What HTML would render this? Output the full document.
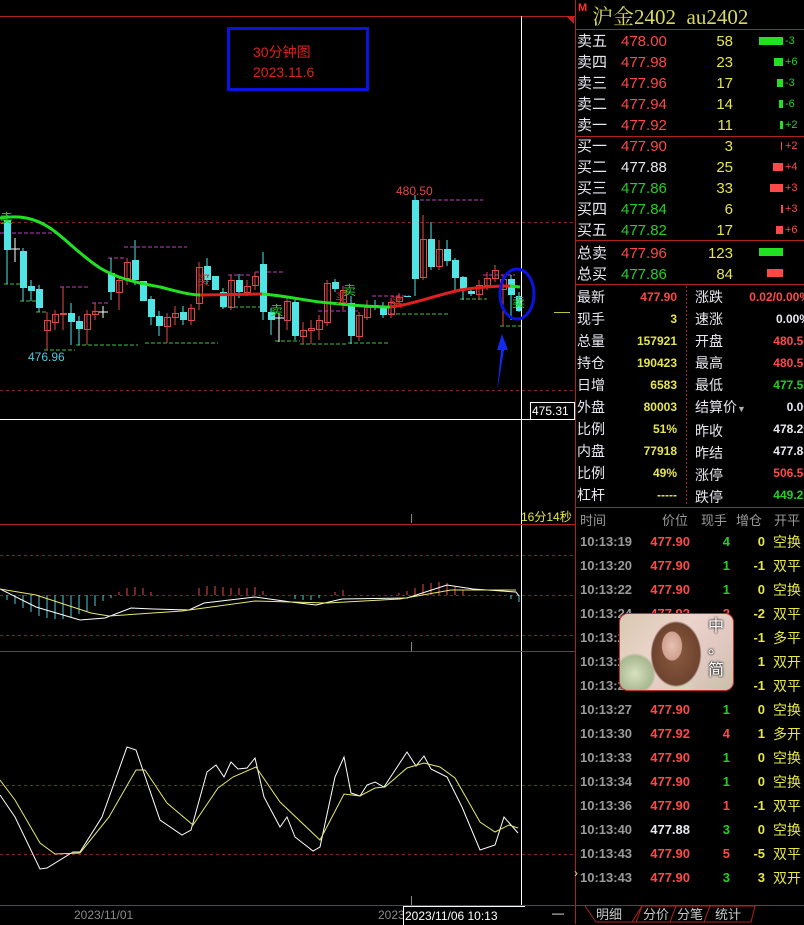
<!DOCTYPE html>
<html><head><meta charset="utf-8"><style>
body{margin:0;width:804px;height:924px;background:#000;overflow:hidden;position:relative;font-family:"Liberation Sans","Noto Sans CJK SC",sans-serif}
.a{position:absolute;white-space:nowrap}
.r{color:#ff4848}.g{color:#22d022}.y{color:#e6e64a}.w{color:#e8e8f0}.gr{color:#9a9a9a}
.ob{font-size:15px;line-height:21px}
.st{font-size:13px;line-height:22px}
.tk{font-size:13px;font-weight:bold;line-height:24px}
</style></head><body>
<svg class="a" style="left:0;top:0" width="804" height="924">
<line x1="0" y1="16.5" x2="575" y2="16.5" stroke="#b02020"/>
<polygon points="566,16 574,16 574,24" fill="#c02020"/>
<line x1="575.5" y1="0" x2="575.5" y2="924" stroke="#b02020"/>
<line x1="521.5" y1="16" x2="521.5" y2="905" stroke="#fff"/>
<line x1="0" y1="222.5" x2="575" y2="222.5" stroke="#902020" stroke-dasharray="3,3"/>
<line x1="0" y1="390.5" x2="575" y2="390.5" stroke="#902020" stroke-dasharray="3,3"/>
<line x1="0" y1="419.5" x2="575" y2="419.5" stroke="#fff"/>
<rect x="530.5" y="402.5" width="44" height="17" fill="#000" stroke="#fff"/>
<line x1="0" y1="524.5" x2="575" y2="524.5" stroke="#b02020"/>
<line x1="411.5" y1="514" x2="411.5" y2="523" stroke="#888"/>
<line x1="0" y1="555.5" x2="575" y2="555.5" stroke="#902020" stroke-dasharray="3,3"/>
<line x1="0" y1="595.5" x2="575" y2="595.5" stroke="#902020" stroke-dasharray="3,3"/>
<line x1="0" y1="635.5" x2="575" y2="635.5" stroke="#902020" stroke-dasharray="3,3"/>
<line x1="0" y1="651.5" x2="575" y2="651.5" stroke="#b02020"/>
<line x1="411.5" y1="642" x2="411.5" y2="651" stroke="#888"/>
<line x1="0" y1="785.5" x2="575" y2="785.5" stroke="#902020" stroke-dasharray="3,3"/>
<line x1="0" y1="854.5" x2="575" y2="854.5" stroke="#902020" stroke-dasharray="3,3"/>
<line x1="0" y1="905.5" x2="575" y2="905.5" stroke="#b02020"/>
<line x1="411.5" y1="896" x2="411.5" y2="905" stroke="#888"/>
<line x1="554" y1="312.5" x2="570" y2="312.5" stroke="#c0c040"/>
<rect x="228.5" y="28.5" width="139" height="61" fill="none" stroke="#0a14e0" stroke-width="3"/>
<g stroke="#c040c0" stroke-dasharray="4,2">
<line x1="0" y1="233" x2="58" y2="233"/><line x1="60" y1="287" x2="90" y2="287"/><line x1="124" y1="247" x2="187" y2="247"/><line x1="108" y1="258" x2="124" y2="258"/><line x1="92" y1="303" x2="108" y2="303"/><line x1="228" y1="275" x2="250" y2="275"/><line x1="255" y1="272" x2="283" y2="272"/><line x1="318" y1="311" x2="360" y2="311"/><line x1="372" y1="296" x2="410" y2="296"/><line x1="420" y1="200" x2="483" y2="200"/><line x1="483" y1="275" x2="515" y2="275"/>
</g>
<g stroke="#40c040" stroke-dasharray="4,2">
<line x1="4" y1="284" x2="20" y2="284"/><line x1="20" y1="301" x2="40" y2="301"/><line x1="36" y1="312" x2="46" y2="312"/><line x1="44" y1="350" x2="75" y2="350"/><line x1="76" y1="345" x2="138" y2="345"/><line x1="145" y1="343" x2="218" y2="343"/><line x1="222" y1="307" x2="260" y2="307"/><line x1="275" y1="341" x2="300" y2="341"/><line x1="300" y1="344" x2="348" y2="344"/><line x1="348" y1="343" x2="388" y2="343"/><line x1="390" y1="314" x2="450" y2="314"/><line x1="460" y1="299" x2="487" y2="299"/><line x1="500" y1="326" x2="521" y2="326"/>
</g>
<g stroke-width="1">
<g stroke="#4fe5e5"><line x1="7" y1="215" x2="7" y2="284"/><line x1="23" y1="248" x2="23" y2="301"/><line x1="31" y1="280" x2="31" y2="301"/><line x1="39" y1="285" x2="39" y2="312"/><line x1="71" y1="303" x2="71" y2="345"/><line x1="79" y1="316" x2="79" y2="345"/><line x1="111" y1="258" x2="111" y2="300"/><line x1="135" y1="240" x2="135" y2="285"/><line x1="151" y1="296" x2="151" y2="325"/><line x1="159" y1="311" x2="159" y2="336"/><line x1="183" y1="306" x2="183" y2="325"/><line x1="207" y1="258" x2="207" y2="284"/><line x1="223" y1="288" x2="223" y2="309"/><line x1="239" y1="274" x2="239" y2="298"/><line x1="263" y1="252" x2="263" y2="320"/><line x1="271" y1="308" x2="271" y2="335"/><line x1="295" y1="298" x2="295" y2="340"/><line x1="335" y1="279" x2="335" y2="292"/><line x1="351" y1="296" x2="351" y2="344"/><line x1="375" y1="300" x2="375" y2="310"/><line x1="383" y1="302" x2="383" y2="318"/><line x1="415" y1="195" x2="415" y2="296"/><line x1="431" y1="222" x2="431" y2="270"/><line x1="447" y1="240" x2="447" y2="266"/><line x1="455" y1="258" x2="455" y2="290"/><line x1="463" y1="276" x2="463" y2="300"/><line x1="471" y1="288" x2="471" y2="296"/><line x1="511" y1="275" x2="511" y2="320"/><line x1="519" y1="292" x2="519" y2="312"/></g>
<g stroke="#e04848"><line x1="47" y1="312" x2="47" y2="350"/><line x1="55" y1="310" x2="55" y2="330"/><line x1="63" y1="287" x2="63" y2="330"/><line x1="87" y1="310" x2="87" y2="345"/><line x1="95" y1="303" x2="95" y2="320"/><line x1="119" y1="276" x2="119" y2="310"/><line x1="127" y1="258" x2="127" y2="285"/><line x1="167" y1="313" x2="167" y2="343"/><line x1="175" y1="306" x2="175" y2="325"/><line x1="191" y1="304" x2="191" y2="325"/><line x1="199" y1="262" x2="199" y2="310"/><line x1="231" y1="275" x2="231" y2="310"/><line x1="247" y1="280" x2="247" y2="296"/><line x1="255" y1="272" x2="255" y2="290"/><line x1="287" y1="298" x2="287" y2="330"/><line x1="303" y1="322" x2="303" y2="344"/><line x1="311" y1="320" x2="311" y2="344"/><line x1="319" y1="315" x2="319" y2="340"/><line x1="327" y1="280" x2="327" y2="326"/><line x1="343" y1="286" x2="343" y2="310"/><line x1="359" y1="312" x2="359" y2="341"/><line x1="367" y1="300" x2="367" y2="320"/><line x1="391" y1="298" x2="391" y2="318"/><line x1="399" y1="293" x2="399" y2="303"/><line x1="423" y1="215" x2="423" y2="280"/><line x1="439" y1="240" x2="439" y2="270"/><line x1="479" y1="280" x2="479" y2="300"/><line x1="487" y1="272" x2="487" y2="290"/><line x1="495" y1="265" x2="495" y2="282"/><line x1="503" y1="276" x2="503" y2="326"/></g>
<line x1="15" y1="238" x2="15" y2="262" stroke="#fff"/><line x1="10" y1="249" x2="20" y2="249" stroke="#fff"/>
<line x1="103" y1="306" x2="103" y2="318" stroke="#fff"/><line x1="98" y1="312" x2="108" y2="312" stroke="#fff"/>
<line x1="279" y1="313" x2="279" y2="342" stroke="#fff"/><line x1="274" y1="318" x2="284" y2="318" stroke="#fff"/>
</g>
<g fill="#4fe5e5">
<rect x="4" y="220" width="7" height="30"/><rect x="20" y="251" width="7" height="37"/><rect x="28" y="286" width="7" height="5"/><rect x="36" y="289" width="7" height="19"/><rect x="68" y="313" width="7" height="9"/><rect x="76" y="321" width="7" height="8"/><rect x="108" y="273" width="7" height="19"/><rect x="132" y="260" width="7" height="20"/><rect x="140" y="281" width="7" height="20"/><rect x="148" y="299" width="7" height="18"/><rect x="156" y="316" width="7" height="10"/><rect x="180" y="312" width="7" height="8"/><rect x="204" y="266" width="7" height="14"/><rect x="212" y="276" width="7" height="14"/><rect x="220" y="292" width="7" height="15"/><rect x="236" y="280" width="7" height="12"/><rect x="260" y="264" width="7" height="48"/><rect x="268" y="312" width="7" height="8"/><rect x="292" y="302" width="7" height="34"/><rect x="332" y="282" width="7" height="7"/><rect x="348" y="303" width="7" height="33"/><rect x="372" y="305" width="7" height="2"/><rect x="380" y="307" width="7" height="8"/><rect x="404" y="296" width="7" height="1"/><rect x="412" y="200" width="7" height="79"/><rect x="428" y="239" width="7" height="28"/><rect x="444" y="249" width="7" height="12"/><rect x="452" y="260" width="7" height="18"/><rect x="460" y="277" width="7" height="13"/><rect x="468" y="291" width="7" height="3"/><rect x="508" y="279" width="7" height="16"/><rect x="516" y="296" width="5" height="15"/>
</g>
<g fill="none" stroke="#e04848">
<rect x="44.5" y="320.5" width="6" height="10"/><rect x="52.5" y="314.5" width="6" height="8"/><rect x="60.5" y="313.5" width="6" height="1"/><rect x="84.5" y="314.5" width="6" height="15"/><rect x="92.5" y="311.5" width="6" height="3"/><rect x="116.5" y="280.5" width="6" height="12"/><rect x="124.5" y="262.5" width="6" height="16"/><rect x="164.5" y="317.5" width="6" height="9"/><rect x="172.5" y="313.5" width="6" height="4"/><rect x="188.5" y="308.5" width="6" height="12"/><rect x="196.5" y="267.5" width="6" height="36"/><rect x="228.5" y="280.5" width="6" height="27"/><rect x="244.5" y="286.5" width="6" height="6"/><rect x="252.5" y="276.5" width="6" height="9"/><rect x="284.5" y="301.5" width="6" height="19"/><rect x="300.5" y="330.5" width="6" height="6"/><rect x="308.5" y="328.5" width="6" height="2"/><rect x="316.5" y="320.5" width="6" height="9"/><rect x="324.5" y="283.5" width="6" height="39"/><rect x="340.5" y="290.5" width="6" height="13"/><rect x="356.5" y="315.5" width="6" height="21"/><rect x="364.5" y="307.5" width="6" height="10"/><rect x="388.5" y="302.5" width="6" height="12"/><rect x="396.5" y="297.5" width="6" height="4"/><rect x="420.5" y="239.5" width="6" height="38"/><rect x="436.5" y="249.5" width="6" height="17"/><rect x="476.5" y="285.5" width="6" height="9"/><rect x="484.5" y="278.5" width="6" height="7"/><rect x="492.5" y="270.5" width="6" height="8"/><rect x="500.5" y="279.5" width="6" height="10"/>
</g>
<path d="M0,218 C20,215 35,218 50,228 C65,238 80,255 100,268 C120,280 140,283 160,287 C180,292 190,295 200,295" fill="none" stroke="#22e022" stroke-width="3"/>
<path d="M200,295 L262,294" fill="none" stroke="#e02020" stroke-width="3"/>
<path d="M262,294 C290,296 310,302 330,303 C360,306 375,307 390,307" fill="none" stroke="#22e022" stroke-width="3"/>
<path d="M390,307 C410,305 430,297 460,290 C480,287 495,286 510,286" fill="none" stroke="#e02020" stroke-width="3"/>
<path d="M510,286 L520,287" fill="none" stroke="#22e022" stroke-width="3"/>
<ellipse cx="517" cy="294" rx="17" ry="25" fill="none" stroke="#0a14e0" stroke-width="3"/>
<polygon points="502,334 497,350 501,350 497,392 504,350 508,350" fill="#1428f0"/>
<g stroke="#4fc8d8"><line x1="7" y1="595" x2="7" y2="600"/><line x1="15" y1="595" x2="15" y2="604"/><line x1="23" y1="595" x2="23" y2="608"/><line x1="31" y1="595" x2="31" y2="612"/><line x1="39" y1="595" x2="39" y2="616"/><line x1="47" y1="595" x2="47" y2="618"/><line x1="55" y1="595" x2="55" y2="619"/><line x1="63" y1="595" x2="63" y2="619"/><line x1="71" y1="595" x2="71" y2="617"/><line x1="79" y1="595" x2="79" y2="614"/><line x1="87" y1="595" x2="87" y2="611"/><line x1="95" y1="595" x2="95" y2="606"/><line x1="103" y1="595" x2="103" y2="601"/><line x1="111" y1="595" x2="111" y2="598"/><line x1="295" y1="595" x2="295" y2="599"/><line x1="303" y1="595" x2="303" y2="600"/><line x1="311" y1="595" x2="311" y2="600"/><line x1="319" y1="595" x2="319" y2="598"/><line x1="511" y1="595" x2="511" y2="599"/><line x1="519" y1="595" x2="519" y2="602"/></g>
<g stroke="#e04848"><line x1="119" y1="595" x2="119" y2="592"/><line x1="127" y1="595" x2="127" y2="588"/><line x1="135" y1="595" x2="135" y2="587"/><line x1="143" y1="595" x2="143" y2="588"/><line x1="151" y1="595" x2="151" y2="592"/><line x1="199" y1="595" x2="199" y2="588"/><line x1="207" y1="595" x2="207" y2="586"/><line x1="215" y1="595" x2="215" y2="586"/><line x1="223" y1="595" x2="223" y2="587"/><line x1="231" y1="595" x2="231" y2="588"/><line x1="239" y1="595" x2="239" y2="588"/><line x1="247" y1="595" x2="247" y2="588"/><line x1="255" y1="595" x2="255" y2="587"/><line x1="263" y1="595" x2="263" y2="591"/><line x1="335" y1="595" x2="335" y2="592"/><line x1="343" y1="595" x2="343" y2="590"/><line x1="399" y1="595" x2="399" y2="593"/><line x1="407" y1="595" x2="407" y2="591"/><line x1="415" y1="595" x2="415" y2="588"/><line x1="423" y1="595" x2="423" y2="584"/><line x1="431" y1="595" x2="431" y2="583"/><line x1="439" y1="595" x2="439" y2="582"/><line x1="447" y1="595" x2="447" y2="583"/><line x1="455" y1="595" x2="455" y2="586"/><line x1="463" y1="595" x2="463" y2="590"/></g>
<polyline points="0,589 36,607 80,620 105,618 131,608 153,609 189,610 204,603 255,597 291,602 316,605 342,599 407,598 447,585 473,589 516,592 519,596" fill="none" stroke="#fff"/>
<polyline points="0,589 36,595 91,613 109,616 182,611 255,601 327,603 400,599 451,590 516,590" fill="none" stroke="#e8e870"/>
<polyline points="0,795 15,817 40,869 47,868 73,852 80,852 102,817 127,747 136,750 160,820 182,835 191,830 207,772 216,765 224,777 231,762 238,769 247,768 255,758 264,797 280,827 287,817 295,837 313,851 320,847 335,777 344,757 351,793 360,796 367,785 375,782 384,787 407,752 416,766 424,756 431,769 447,777 462,807 480,850 495,845 504,817 518,833" fill="none" stroke="#fff"/>
<polyline points="0,780 15,800 40,843 55,854 80,853 109,817 136,770 145,770 167,803 193,825 218,788 233,777 256,767 280,802 320,840 344,794 360,796 375,788 385,787 407,768 424,763 440,767 455,778 480,822 495,832 509,825 518,828" fill="none" stroke="#e8e870"/>
<line x1="576" y1="29.5" x2="804" y2="29.5" stroke="#b02020"/>
<line x1="576" y1="136.5" x2="804" y2="136.5" stroke="#b02020"/>
<line x1="576" y1="240.5" x2="804" y2="240.5" stroke="#b02020"/>
<line x1="576" y1="284.5" x2="804" y2="284.5" stroke="#b02020"/>
<line x1="686.5" y1="286" x2="686.5" y2="506" stroke="#b02020" stroke-dasharray="2,2"/>
<line x1="576" y1="507.5" x2="804" y2="507.5" stroke="#b02020"/>
<g fill="#22e022"><rect x="759" y="37" width="24" height="8"/><rect x="774" y="58" width="9" height="8"/><rect x="777" y="79" width="6" height="8"/><rect x="779" y="100" width="4" height="8"/><rect x="780" y="121" width="3" height="8"/><rect x="759" y="248" width="24" height="8"/></g>
<g fill="#ff4848"><rect x="781" y="142" width="1" height="8"/><rect x="773" y="163" width="10" height="8"/><rect x="770" y="184" width="13" height="8"/><rect x="781" y="205" width="2" height="8"/><rect x="776" y="226" width="7" height="8"/><rect x="767" y="269" width="16" height="8"/></g>
<line x1="576" y1="905.5" x2="804" y2="905.5" stroke="#b02020"/>
<path d="M585,906 L596,922 L632,922 L642,906 M642,906 L632,922 M642,906 L674,906 M632,922 L636,922 L642,906 L676,906 L670,922 L636,922 M676,906 L710,906 L704,922 L670,922 M710,906 L755,906 L751,922 L704,922" fill="none" stroke="#b02020"/>
<text x="596" y="919" fill="#c8c8c8" font-size="13" font-family="Noto Sans CJK SC">明细</text>
<text x="643" y="919" fill="#c8c8c8" font-size="13" font-family="Noto Sans CJK SC">分价</text>
<text x="677" y="919" fill="#c8c8c8" font-size="13" font-family="Noto Sans CJK SC">分笔</text>
<text x="715" y="919" fill="#c8c8c8" font-size="13" font-family="Noto Sans CJK SC">统计</text>
</svg>

<div class="a" style="left:253px;top:42px;color:#e02020;font-size:14px;line-height:20px">30分钟图<br>2023.11.6</div>
<div class="a" style="left:396px;top:184px;color:#e04848;font-size:12px">480.50</div>
<div class="a" style="left:28px;top:350px;color:#4fc8e0;font-size:12px">476.96</div>
<div class="a" style="left:0px;top:208px;color:#22d022;font-size:13px">卖</div>
<div class="a" style="left:197px;top:270px;color:#e02020;font-size:13px">买</div>
<div class="a" style="left:270px;top:300px;color:#22d022;font-size:13px">卖</div>
<div class="a" style="left:335px;top:288px;color:#e02020;font-size:13px">买</div>
<div class="a" style="left:343px;top:280px;color:#22d022;font-size:13px">卖</div>
<div class="a" style="left:390px;top:292px;color:#e02020;font-size:13px">买</div>
<div class="a" style="left:512px;top:292px;color:#22d022;font-size:13px">卖</div>
<div class="a" style="left:532px;top:404px;color:#fff;font-size:12px">475.31</div>
<div class="a" style="left:521px;top:508px;color:#e6e64a;font-size:12px">16分14秒</div>
<div class="a" style="left:74px;top:908px;color:#8a8a8a;font-size:12px">2023/11/01</div>
<div class="a" style="left:378px;top:908px;color:#8a8a8a;font-size:12px">2023</div>
<div class="a" style="left:403px;top:906px;width:120px;height:18px;background:#000;border-left:1px solid #fff;border-top:1px solid #fff;color:#fff;font-size:12px;line-height:18px;padding-left:1px">2023/11/06 10:13</div>
<div class="a" style="left:552px;top:906px;color:#fff;font-size:12px">—</div>

<div class="a" style="left:578px;top:2px;color:#ff3030;font-size:11px;font-weight:bold">M</div>
<div class="a" style="left:592px;top:1px;color:#d8d860;font-size:21px;font-family:'Liberation Serif','Noto Serif CJK SC',serif">沪金2402&nbsp; au2402</div>

<div class="a ob w" style="left:577px;top:31px">卖五<br>卖四<br>卖三<br>卖二<br>卖一</div>
<div class="a ob r" style="left:621px;top:31px">478.00<br>477.98<br>477.96<br>477.94<br>477.92</div>
<div class="a ob y" style="left:700px;top:31px;width:33px;text-align:right">58<br>23<br>17<br>14<br>11</div>
<div class="a g" style="left:785px;top:31px;font-size:11px;line-height:21px">-3<br>+6<br>-3<br>-6<br>+2</div>
<div class="a ob w" style="left:577px;top:136px">买一<br>买二<br>买三<br>买四<br>买五</div>
<div class="a ob" style="left:621px;top:136px"><span class="r">477.90</span><br><span class="w">477.88</span><br><span class="g">477.86</span><br><span class="g">477.84</span><br><span class="g">477.82</span></div>
<div class="a ob y" style="left:700px;top:136px;width:33px;text-align:right">3<br>25<br>33<br>6<br>17</div>
<div class="a r" style="left:785px;top:136px;font-size:11px;line-height:21px">+2<br>+4<br>+3<br>+3<br>+6</div>
<div class="a ob w" style="left:577px;top:243px">总卖<br>总买</div>
<div class="a ob" style="left:621px;top:243px"><span class="r">477.96</span><br><span class="g">477.86</span></div>
<div class="a ob y" style="left:690px;top:243px;width:43px;text-align:right">123<br>84</div>

<div class="a st w" style="left:577px;top:286px;font-size:14px">最新<br>现手<br>总量<br>持仓<br>日增<br>外盘<br>比例<br>内盘<br>比例<br>杠杆</div>
<div class="a st" style="left:620px;top:286px;width:57px;text-align:right;font-weight:bold;font-size:12px"><span class="r">477.90</span><br><span class="y">3</span><br><span class="y">157921</span><br><span class="y">190423</span><br><span class="y">6583</span><br><span class="y">80003</span><br><span class="y">51%</span><br><span class="y">77918</span><br><span class="y">49%</span><br><span class="y">-----</span></div>
<div class="a st w" style="left:695px;top:286px;font-size:14px">涨跌<br>速涨<br>开盘<br>最高<br>最低<br>结算价<span style="font-size:9px;color:#aaa">▼</span><br>昨收<br>昨结<br>涨停<br>跌停</div>
<div class="a st" style="left:740px;top:286px;font-weight:bold;font-size:12px;width:70px;text-align:right"><span class="r">0.02/0.00%</span><br><span class="w">0.00%</span><br><span class="r">480.50</span><br><span class="r">480.50</span><br><span class="g">477.52</span><br><span class="w">0.00</span><br><span class="w">478.20</span><br><span class="w">477.88</span><br><span class="r">506.54</span><br><span class="g">449.20</span></div>

<div class="a gr" style="left:580px;top:510px;font-size:13px">时间</div>
<div class="a gr" style="left:662px;top:510px;font-size:13px">价位</div>
<div class="a gr" style="left:701px;top:510px;font-size:13px">现手</div>
<div class="a gr" style="left:736px;top:510px;font-size:13px">增仓</div>
<div class="a gr" style="left:774px;top:510px;font-size:13px">开平</div>

<div class="a tk gr" style="left:580px;top:530px">10:13:19<br>10:13:20<br>10:13:22<br>10:13:24<br>10:13:25<br>10:13:25<br>10:13:26<br>10:13:27<br>10:13:30<br>10:13:33<br>10:13:34<br>10:13:36<br>10:13:40<br>10:13:43<br>10:13:43</div>
<div class="a" style="left:574px;top:866px;color:#e6e64a;font-size:12px">›</div>
<div class="a tk" style="left:640px;top:530px;width:50px;text-align:right"><span class="r">477.90</span><br><span class="r">477.90</span><br><span class="r">477.90</span><br><span class="r">477.92</span><br><span class="r">477.90</span><br><span class="r">477.90</span><br><span class="r">477.90</span><br><span class="r">477.90</span><br><span class="r">477.92</span><br><span class="r">477.90</span><br><span class="r">477.90</span><br><span class="r">477.90</span><br><span class="w">477.88</span><br><span class="r">477.90</span><br><span class="r">477.90</span></div>
<div class="a tk" style="left:710px;top:530px;width:20px;text-align:right"><span class="g">4</span><br><span class="g">1</span><br><span class="g">1</span><br><span class="r">2</span><br><span class="g">1</span><br><span class="g">1</span><br><span class="g">1</span><br><span class="g">1</span><br><span class="r">4</span><br><span class="g">1</span><br><span class="g">1</span><br><span class="r">1</span><br><span class="g">3</span><br><span class="r">5</span><br><span class="g">3</span></div>
<div class="a tk y" style="left:740px;top:530px;width:25px;text-align:right">0<br>-1<br>0<br>-2<br>-1<br>1<br>-1<br>0<br>1<br>0<br>0<br>-1<br>0<br>-5<br>3</div>
<div class="a y" style="left:773px;top:530px;font-size:14px;line-height:24px">空换<br>双平<br>空换<br>双平<br>多平<br>双开<br>双平<br>空换<br>多开<br>空换<br>空换<br>双平<br>空换<br>双平<br>双开</div>

<div class="a" style="left:619px;top:613px;width:113px;height:76px;border:1px solid #c03030;border-radius:9px;overflow:hidden;background:radial-gradient(ellipse 14px 20px at 52px 32px,#e6c2b2 0%,#d0a090 70%,transparent 75%),radial-gradient(ellipse 34px 44px at 56px 40px,#8a5a3e 0%,#6e4430 70%,transparent 75%),radial-gradient(ellipse 30px 30px at 15px 60px,#d8e0c0 0%,#a8b890 60%,transparent 70%),radial-gradient(ellipse 25px 20px at 60px 72px,#d0d8b8 0%,transparent 70%),linear-gradient(135deg,#d8c8b0 0%,#ecd4cc 40%,#e0c8c0 70%,#c8c0a8 100%)">
<div class="a" style="left:88px;top:2px;color:#fff;font-size:16px;line-height:22px;text-align:center;text-shadow:0 0 2px #222,0 0 2px #222">中<br>。<br>简</div>
</div>
</body></html>
